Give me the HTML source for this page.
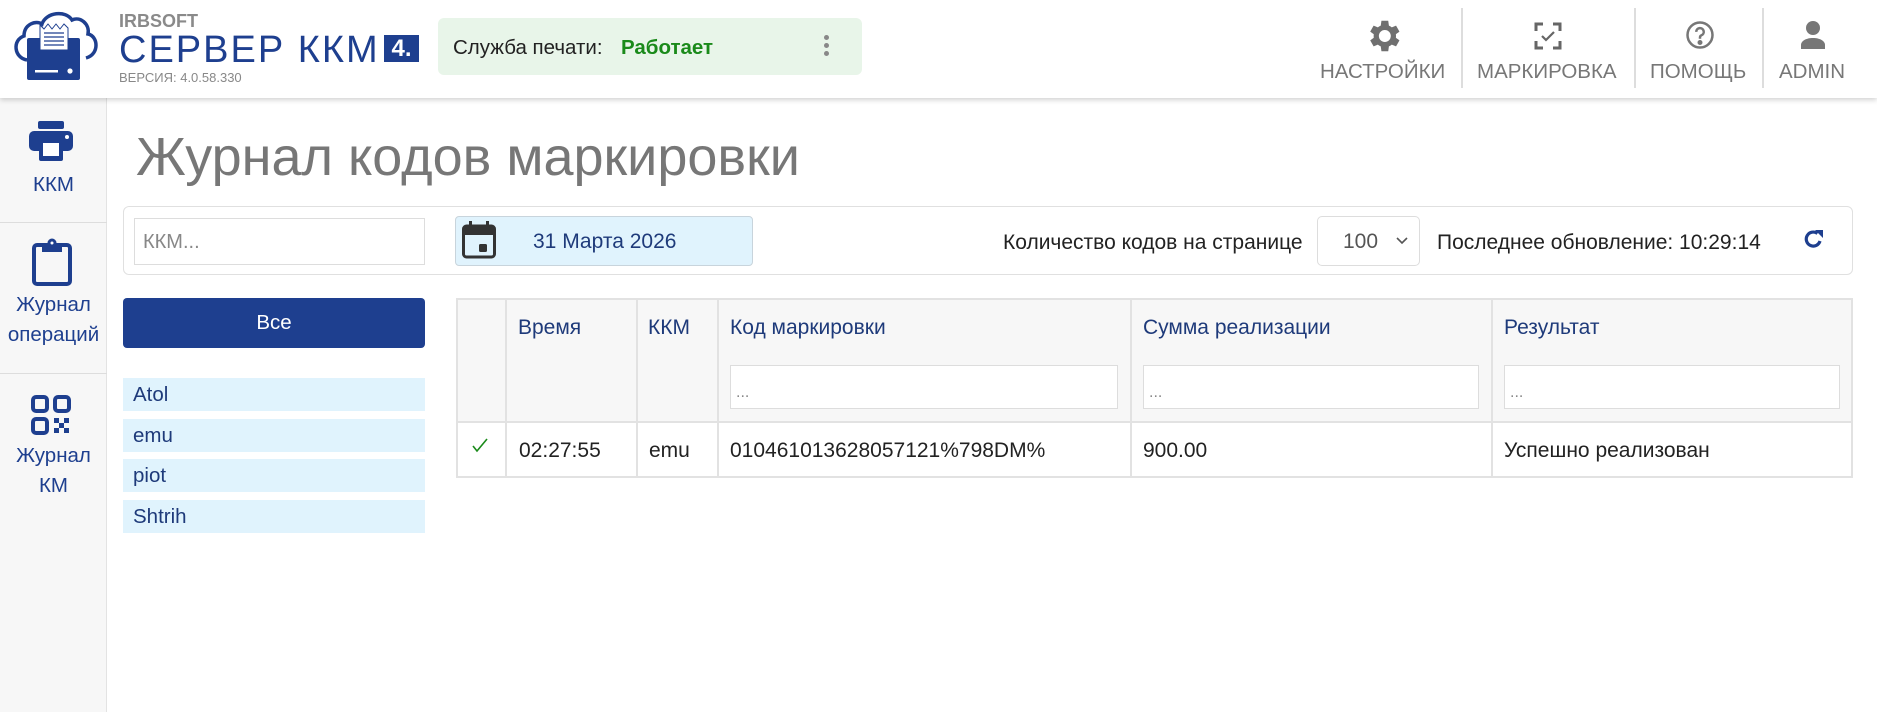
<!DOCTYPE html>
<html><head><meta charset="utf-8">
<style>
*{box-sizing:border-box;margin:0;padding:0}
body{width:1877px;height:712px;overflow:hidden;background:#fff;font-family:"Liberation Sans",Arial,sans-serif;position:relative;color:#222}
.abs{position:absolute}
#hdr{left:0;top:0;width:1877px;height:98px;background:#fff;box-shadow:0 2px 5px rgba(0,0,0,.18);z-index:2}
#side{left:0;top:98px;width:107px;height:614px;background:#f7f7f7;border-right:1px solid #e3e3e3}
.sl{color:#1e3f8f;font-size:20.5px;text-align:center;width:107px;line-height:30px}
.sep{left:0;width:107px;height:1px;background:#ddd}
.nav{color:#777;font-size:20.5px;top:60px;white-space:nowrap}
.vs{top:8px;width:2px;height:80px;background:#ddd}
.li{left:123px;width:302px;height:33px;background:#e0f3fd;color:#1e3a7a;font-size:20.5px;line-height:33px;padding-left:10px}
.th{color:#1e3a7a;font-size:21px;top:316px}
.td{font-size:21px;top:439px;color:#222}
.fi{top:365px;height:44px;background:#fff;border:1px solid #ddd;color:#888;font-size:16px;padding:18px 0 0 5px}
.vl{top:298px;width:2px;height:180px;background:#e2e2e2}
</style></head><body>
<div id="hdr" class="abs">
<svg class="abs" style="left:10px;top:8px" width="92" height="80" viewBox="10 8 92 80">
<path d="M27 60 C14 58 12 40 24 36 C24 24 36 20 42 24 C46 12 66 10 72 20 C80 16 90 24 88 34 C98 36 100 54 86 58" fill="none" stroke="#1e3f8f" stroke-width="3.5"/>
<rect x="27" y="38" width="53" height="42" rx="2" fill="#1e3f8f"/>
<path d="M40 50 L40 25 L44 29 L48 24 L52 29 L56 24 L60 29 L64 24 L68 28 L68 50 Z" fill="#fff" stroke="#1e3f8f" stroke-width="1"/>
<g stroke="#1e3f8f" stroke-width="1.3"><line x1="44" y1="33" x2="64" y2="33"/><line x1="44" y1="37" x2="64" y2="37"/><line x1="44" y1="41" x2="64" y2="41"/><line x1="44" y1="45" x2="64" y2="45"/></g>
<rect x="35" y="70" width="23" height="2.5" fill="#fff"/><circle cx="70" cy="71" r="2.6" fill="#fff"/>
</svg>
<div class="abs" style="left:119px;top:11px;font-size:18px;font-weight:bold;color:#8a8a8a">IRBSOFT</div>
<div class="abs" style="left:119px;top:29px;font-size:38px;color:#1e3f8f;letter-spacing:2px;white-space:nowrap">СЕРВЕР ККМ</div>
<div class="abs" style="left:384px;top:35px;width:35px;height:27px;background:#1e3f8f;color:#fff;font-size:24px;font-weight:bold;text-align:center;line-height:27px">4.</div>
<div class="abs" style="left:119px;top:70px;font-size:13px;color:#888">ВЕРСИЯ: 4.0.58.330</div>
<div class="abs" style="left:438px;top:18px;width:424px;height:57px;background:#e8f5e9;border-radius:6px"></div>
<div class="abs" style="left:453px;top:36px;font-size:20.5px;color:#222">Служба печати:</div>
<div class="abs" style="left:621px;top:36px;font-size:20.5px;color:#1a8a1a;font-weight:bold">Работает</div>
<div class="abs" style="left:824px;top:35px;width:5px"><div style="width:5px;height:5px;border-radius:50%;background:#888;margin-bottom:3px"></div><div style="width:5px;height:5px;border-radius:50%;background:#888;margin-bottom:3px"></div><div style="width:5px;height:5px;border-radius:50%;background:#888"></div></div>
<svg class="abs" style="left:1368px;top:19px" width="34" height="34" viewBox="3 2 20 20"><path fill="#6f6f6f" d="M19.4 13a7.5 7.5 0 0 0 0-2l2.1-1.6-2-3.5-2.5 1a7.4 7.4 0 0 0-1.7-1L14.9 3h-4l-.4 2.9a7.4 7.4 0 0 0-1.7 1l-2.5-1-2 3.5L6.4 11a7.5 7.5 0 0 0 0 2l-2.1 1.6 2 3.5 2.5-1a7.4 7.4 0 0 0 1.7 1l.4 2.9h4l.4-2.9a7.4 7.4 0 0 0 1.7-1l2.5 1 2-3.5zM12.9 15.5a3.5 3.5 0 1 1 0-7 3.5 3.5 0 0 1 0 7z"/></svg>
<div class="abs nav" style="left:1320px">НАСТРОЙКИ</div>
<div class="abs vs" style="left:1461px"></div>
<svg class="abs" style="left:1534px;top:22px" width="28" height="28" viewBox="0 0 28 28" fill="none" stroke="#666" stroke-width="3"><path d="M2 9V2h7M19 2h7v7M26 19v7h-7M9 26H2v-7"/><path d="M8 14l4 4 8-8" stroke-width="2.2"/></svg>
<div class="abs nav" style="left:1477px">МАРКИРОВКА</div>
<div class="abs vs" style="left:1634px"></div>
<svg class="abs" style="left:1685px;top:20px" width="30" height="30" viewBox="0 0 24 24" fill="none" stroke="#777" stroke-width="2"><circle cx="12" cy="12" r="10"/><path d="M9 9.5a3 3 0 1 1 4 2.8c-.8.4-1 .9-1 1.7V15"/><circle cx="12" cy="18" r="1" fill="#777"/></svg>
<div class="abs nav" style="left:1650px">ПОМОЩЬ</div>
<div class="abs vs" style="left:1762px"></div>
<svg class="abs" style="left:1800px;top:21px" width="26" height="28" viewBox="0 0 26 28"><circle cx="13" cy="7" r="7" fill="#777"/><path d="M1 28v-4c0-4 5-7 12-7s12 3 12 7v4z" fill="#777"/></svg>
<div class="abs nav" style="left:1779px">ADMIN</div>
</div>

<div id="side" class="abs"></div>
<svg class="abs" style="left:29px;top:121px" width="44" height="40" viewBox="0 0 44 40"><rect x="9" y="0" width="26" height="8" rx="2" fill="#1e3f8f"/><rect x="0" y="10" width="44" height="20" rx="5" fill="#1e3f8f"/><rect x="10" y="22" width="24" height="18" rx="2" fill="#1e3f8f"/><rect x="14" y="22" width="16" height="13" fill="#fff"/><circle cx="38" cy="16" r="2" fill="#fff"/></svg>
<div class="abs sl" style="top:170px">ККМ</div>
<div class="abs sep" style="top:222px"></div>
<svg class="abs" style="left:32px;top:238px" width="40" height="48" viewBox="0 0 40 48" fill="none" stroke="#1e3f8f" stroke-width="4"><rect x="2" y="7" width="36" height="39" rx="3"/><path d="M12 7h16v5H12z" fill="#1e3f8f"/><circle cx="20" cy="5" r="3" fill="#fff" stroke-width="3"/></svg>
<div class="abs sl" style="top:290px">Журнал<br>операций</div>
<div class="abs sep" style="top:373px"></div>
<svg class="abs" style="left:31px;top:395px" width="40" height="40" viewBox="0 0 40 40" fill="none" stroke="#1e3f8f" stroke-width="4"><rect x="2" y="2" width="14" height="14" rx="3"/><rect x="24" y="2" width="14" height="14" rx="3"/><rect x="2" y="24" width="14" height="14" rx="3"/><g fill="#1e3f8f" stroke="none"><rect x="23" y="23" width="5" height="5"/><rect x="33" y="23" width="5" height="5"/><rect x="28" y="28" width="5" height="5"/><rect x="23" y="33" width="5" height="5"/><rect x="33" y="33" width="5" height="5"/></g></svg>
<div class="abs sl" style="top:441px">Журнал<br>КМ</div>

<div class="abs" style="left:136px;top:126px;font-size:54px;color:#777;white-space:nowrap">Журнал кодов маркировки</div>

<div class="abs" style="left:123px;top:206px;width:1730px;height:69px;border:1px solid #e0e0e0;border-radius:6px"></div>
<div class="abs" style="left:134px;top:218px;width:291px;height:47px;border:1px solid #ddd;color:#888;font-size:20px;padding:12px 0 0 8px">ККМ...</div>
<div class="abs" style="left:455px;top:216px;width:298px;height:50px;background:#e0f3fd;border:1px solid #c8d4dc;border-radius:4px"></div>
<svg class="abs" style="left:462px;top:221px" width="34" height="38" viewBox="0 0 34 38"><rect x="1.5" y="5" width="31" height="31" rx="3" fill="none" stroke="#333" stroke-width="3"/><rect x="1.5" y="5" width="31" height="9" fill="#333"/><rect x="7" y="0" width="3" height="7" fill="#333"/><rect x="24" y="0" width="3" height="7" fill="#333"/><rect x="17" y="23" width="8" height="8" rx="1.5" fill="#333"/></svg>
<div class="abs" style="left:533px;top:230px;font-size:21px;color:#1e3a7a">31 Марта 2026</div>
<div class="abs" style="left:1003px;top:231px;font-size:21px;color:#222;white-space:nowrap">Количество кодов на странице</div>
<div class="abs" style="left:1317px;top:216px;width:103px;height:50px;border:1px solid #ddd;border-radius:5px"></div>
<div class="abs" style="left:1343px;top:230px;font-size:21px;color:#555">100</div>
<svg class="abs" style="left:1396px;top:237px" width="12" height="8" viewBox="0 0 12 8" fill="none" stroke="#555" stroke-width="1.6"><path d="M1 1l5 5 5-5"/></svg>
<div class="abs" style="left:1437px;top:231px;font-size:21px;color:#222;white-space:nowrap">Последнее обновление: 10:29:14</div>
<svg class="abs" style="left:1803px;top:229px" width="21" height="20" viewBox="0 0 21 20"><path d="M17 12a7 7 0 1 1-2.5-7.5" fill="none" stroke="#1e3f8f" stroke-width="3.2"/><path d="M12 1h8v8z" fill="#1e3f8f"/></svg>

<div class="abs" style="left:123px;top:298px;width:302px;height:50px;background:#1e3f8f;border-radius:4px;color:#fff;font-size:20.5px;text-align:center;line-height:50px">Все</div>
<div class="abs li" style="top:378px">Atol</div>
<div class="abs li" style="top:419px">emu</div>
<div class="abs li" style="top:459px">piot</div>
<div class="abs li" style="top:500px">Shtrih</div>

<div class="abs" style="left:456px;top:298px;width:1397px;height:180px;border:2px solid #e2e2e2;background:#fff"></div>
<div class="abs" style="left:458px;top:300px;width:1393px;height:122px;background:#f7f7f7"></div>
<div class="abs" style="left:458px;top:421px;width:1393px;height:2px;background:#e2e2e2"></div>
<div class="abs vl" style="left:505px"></div>
<div class="abs vl" style="left:636px"></div>
<div class="abs vl" style="left:717px"></div>
<div class="abs vl" style="left:1130px"></div>
<div class="abs vl" style="left:1491px"></div>
<div class="abs th" style="left:518px">Время</div>
<div class="abs th" style="left:648px">ККМ</div>
<div class="abs th" style="left:730px">Код маркировки</div>
<div class="abs th" style="left:1143px">Сумма реализации</div>
<div class="abs th" style="left:1504px">Результат</div>
<div class="abs fi" style="left:730px;width:388px">...</div>
<div class="abs fi" style="left:1143px;width:336px">...</div>
<div class="abs fi" style="left:1504px;width:336px">...</div>
<svg class="abs" style="left:472px;top:438px" width="16" height="15" viewBox="0 0 16 15" fill="none" stroke="#1a8a1a" stroke-width="1.6"><path d="M1 8l4 5L15 1"/></svg>
<div class="abs td" style="left:519px">02:27:55</div>
<div class="abs td" style="left:649px">emu</div>
<div class="abs td" style="left:730px">010461013628057121%798DM%</div>
<div class="abs td" style="left:1143px">900.00</div>
<div class="abs td" style="left:1504px">Успешно реализован</div>
</body></html>
